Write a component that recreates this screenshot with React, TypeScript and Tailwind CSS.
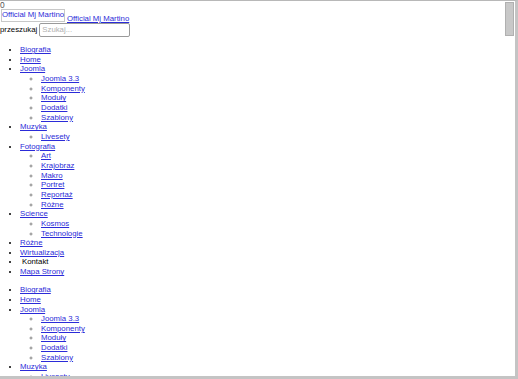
import React from "react";

type Item = { label: string; link?: boolean; children?: string[] };

const menu: Item[] = [
  { label: "Biografia" },
  { label: "Home" },
  { label: "Joomla", children: ["Joomla 3.3", "Komponenty", "Moduły", "Dodatki", "Szablony"] },
  { label: "Muzyka", children: ["Livesety"] },
  { label: "Fotografia", children: ["Art", "Krajobraz", "Makro", "Portret", "Reportaż", "Różne"] },
  { label: "Science", children: ["Kosmos", "Technologie"] },
  { label: "Różne" },
  { label: "Wirtualizacja" },
  { label: "Kontakt", link: false },
  { label: "Mapa Strony" },
];

function Menu() {
  return (
    <ul className="list-disc pl-[20px] my-[8.4px]">
      {menu.map((item, i) => (
        <li key={i}>
          {item.link === false ? (
            <span className="ml-[2px] text-black">{item.label}</span>
          ) : (
            <a href="#" className="text-[#2b2bd8] underline">{item.label}</a>
          )}
          {item.children && (
            <ul className="list-[circle] pl-[21px] marker:text-[#888]">
              {item.children.map((c) => (
                <li key={c}>
                  <a href="#" className="text-[#2b2bd8] underline">{c}</a>
                </li>
              ))}
            </ul>
          )}
        </li>
      ))}
    </ul>
  );
}

export default function App() {
  return (
    <div className="relative w-[518px] h-[379px] overflow-hidden bg-white border-t border-t-[#b8b8b8] border-r-[3px] border-r-[#c4c4c4] border-b-[3px] border-b-[#c4c4c4] font-['Liberation_Sans',Arial,sans-serif] text-[7.8px] leading-[9.66px] text-black">
      <div className="h-full w-[505px] overflow-hidden">
        <div className="text-[#555] text-[8.4px]">0</div>
        <div className="flex items-end gap-[2px] -mt-[2px]">
          <span className="h-[13px] w-[64px] ml-[1px] border border-[#c8c8c8] flex items-center justify-center text-[#2b2bd8] whitespace-nowrap">
            Official Mj Martino
          </span>
          <a href="#" className="text-[#2b2bd8] underline mb-[-2px] whitespace-nowrap">Official Mj Martino</a>
        </div>
        <div className="flex items-center gap-[2px] mt-[1px]">
          <span>przeszukaj</span>
          <input
            placeholder="Szukaj..."
            className="h-[14px] w-[91px] border border-[#9a9a9a] rounded-[2px] px-[2px] text-[7.8px] placeholder:text-[#b0b0b0] outline-none"
          />
        </div>
        <Menu />
        <Menu />
      </div>
      <div className="absolute right-0 top-0 h-full w-[11px] bg-white">
        <div className="mt-[1px] ml-[1px] h-[34px] w-[9px] bg-[#c8c8c8] border border-[#b0b0b0]" />
      </div>
    </div>
  );
}
